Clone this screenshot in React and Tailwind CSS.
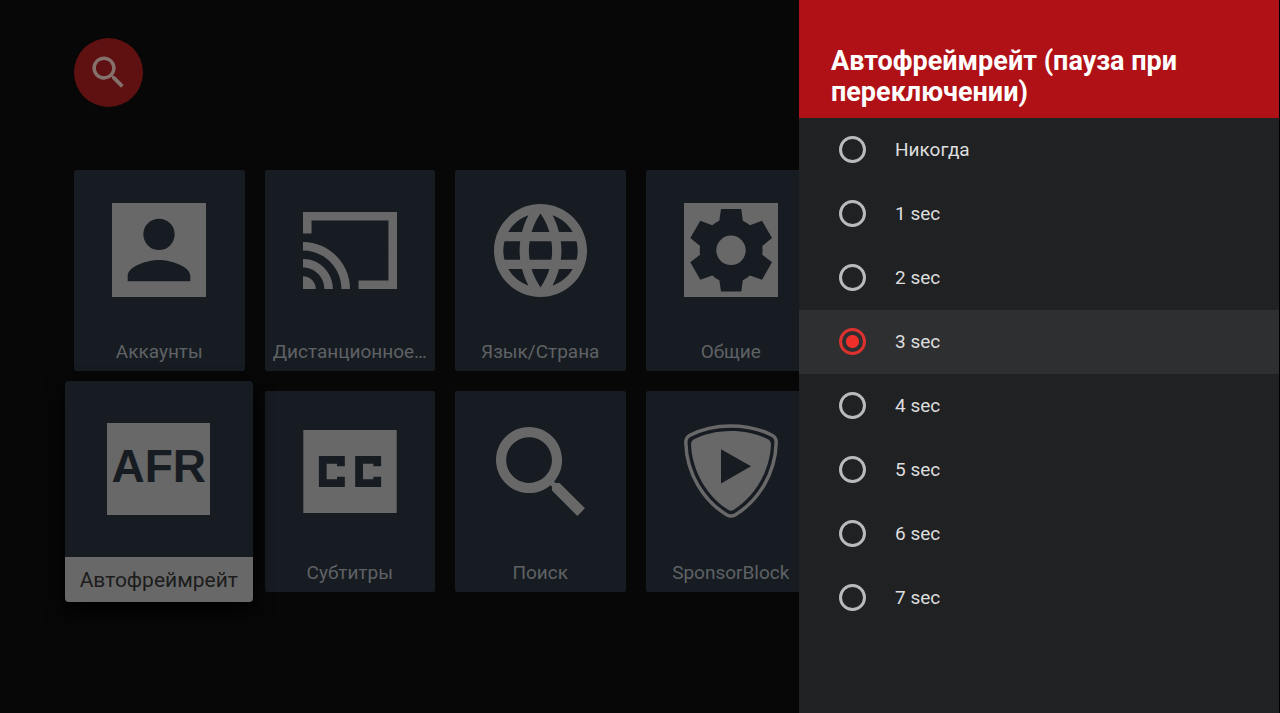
import React, { useState } from 'react';

const SEARCH_PATH =
  'M15.5 14h-.79l-.28-.27C15.41 12.59 16 11.11 16 9.5 16 5.91 13.09 3 9.5 3S3 5.91 3 9.5 5.91 16 9.5 16c1.61 0 3.09-.59 4.23-1.57l.27.28v.79l5 4.99L20.49 19l-4.99-5zm-6 0C7.01 14 5 11.99 5 9.5S7.01 5 9.5 5 14 7.01 14 9.5 11.99 14 9.5 14z';

function AccountIcon() {
  return (
    <svg viewBox="3 3 18 18" className="w-[94px] h-[94px]" fill="currentColor">
      <path fillRule="evenodd" d="M3 3h18v18H3zM12 6a3 3 0 1 0 0 6a3 3 0 1 0 0-6zM6 18h12v-1c0-2-4-3.1-6-3.1s-6 1.1-6 3.1z" />
    </svg>
  );
}

function CastIcon() {
  return (
    <svg viewBox="1 3 22 18" className="w-[94px] h-[77px]" fill="currentColor">
      <path d="M23 3H1v5h2V5h18v14h-7v2h9zM1 18v3h3c0-1.66-1.34-3-3-3zm0-4v2c2.76 0 5 2.24 5 5h2c0-3.87-3.13-7-7-7zm0-4v2c4.97 0 9 4.03 9 9h2c0-6.08-4.93-11-11-11z" />
    </svg>
  );
}

function GlobeIcon() {
  return (
    <svg viewBox="2 2 20 20" className="w-[93px] h-[93px]" fill="currentColor">
      <path d="M11.99 2C6.47 2 2 6.48 2 12s4.47 10 9.99 10C17.52 22 22 17.52 22 12S17.52 2 11.99 2zm6.93 6h-2.95c-.32-1.25-.78-2.45-1.38-3.56 1.84.63 3.37 1.91 4.33 3.56zM12 4.04c.83 1.2 1.48 2.53 1.91 3.96h-3.82c.43-1.43 1.08-2.76 1.91-3.96zM4.26 14C4.1 13.36 4 12.69 4 12s.1-1.36.26-2h3.38c-.08.66-.14 1.32-.14 2s.06 1.34.14 2H4.26zm.82 2h2.95c.32 1.25.78 2.45 1.38 3.56-1.84-.63-3.37-1.9-4.33-3.56zm2.95-8H5.08c.96-1.66 2.49-2.93 4.33-3.56C8.81 5.55 8.35 6.75 8.03 8zM12 19.96c-.83-1.2-1.48-2.53-1.91-3.96h3.82c-.43 1.43-1.08 2.76-1.91 3.96zM14.34 14H9.66c-.09-.66-.16-1.32-.16-2s.07-1.35.16-2h4.68c.09.65.16 1.32.16 2s-.07 1.34-.16 2zm.25 5.56c.6-1.11 1.06-2.31 1.38-3.56h2.95c-.96 1.65-2.49 2.93-4.33 3.56zM16.36 14c.08-.66.14-1.32.14-2s-.06-1.34-.14-2h3.38c.16.64.26 1.31.26 2s-.1 1.36-.26 2h-3.38z" />
    </svg>
  );
}

function GearIcon() {
  return (
    <svg viewBox="0 0 94 94" className="w-[94px] h-[94px]" fill="currentColor">
      <path
        fillRule="evenodd"
        d="M0 0H94V94H0zM37 6L35.3 17.7Q31.5 19.5 28.3 22.3L16.3 17.7L6.3 35L16 43Q15.5 47 16 51.7L6.3 59.3L16.3 76.7L28.3 72.5Q31.5 75.5 35.3 77.3L37 88.5H57.3L58.8 77.3Q62.5 75.5 66 72.5L78 76.7L88 59.3L78.3 51.7Q78.8 47 78.3 43L88 35L78 17.7L66 22.3Q62.5 19.5 58.8 17.7L57.3 6z"
      />
      <circle cx="47" cy="47.3" r="14.7" />
    </svg>
  );
}

function AfrIcon() {
  return (
    <span className="w-[103px] h-[92px] bg-[#686868] text-[#171c22] font-['Liberation_Sans',sans-serif] font-bold text-[46px] leading-[86px] text-center">
      AFR
    </span>
  );
}

function CaptionsIcon() {
  return (
    <svg viewBox="3 4 18 16" className="w-[94px] h-[83px]" fill="currentColor">
      <path fillRule="evenodd" d="M3 4h18v16H3zM6 9v6h5v-2H9.5v.5h-2v-3h2v.5H11V9zM13 9v6h5v-2h-1.5v.5h-2v-3h2v.5H18V9z" />
    </svg>
  );
}

function SearchTileIcon() {
  return (
    <svg viewBox="3 3 17.5 17.5" className="w-[89px] h-[89px]" fill="currentColor">
      <path d={SEARCH_PATH} />
    </svg>
  );
}

function ShieldIcon() {
  return (
    <svg viewBox="0 0 94 94" className="w-[94px] h-[94px]">
      <path
        d="M47 2C30 2 16 6 5.5 11.5Q1.8 13.5 1.8 18.5C2.5 50 20 77 43 91Q47 93 51 91C74 77 91.5 50 92.2 18.5Q92.2 13.5 88.5 11.5C78 6 64 2 47 2z"
        fill="none"
        stroke="currentColor"
        strokeWidth="3.5"
      />
      <path
        fill="currentColor"
        fillRule="evenodd"
        d="M47 7C32 7 19.5 10.5 9.5 15.5Q7 17 7 20C8 49 25 74 44.5 86Q47 87.5 49.5 86C69 74 86 49 87 20Q87 17 84.5 15.5C74.5 10.5 62 7 47 7zM37 25.3V59.5L67 42.3z"
      />
    </svg>
  );
}

const tiles = [
  { label: 'Аккаунты', Icon: AccountIcon },
  { label: 'Дистанционное…', Icon: CastIcon },
  { label: 'Язык/Страна', Icon: GlobeIcon },
  { label: 'Общие', Icon: GearIcon },
  { label: 'Автофреймрейт', Icon: AfrIcon, focused: true },
  { label: 'Субтитры', Icon: CaptionsIcon },
  { label: 'Поиск', Icon: SearchTileIcon },
  { label: 'SponsorBlock', Icon: ShieldIcon },
];

const options = ['Никогда', '1 sec', '2 sec', '3 sec', '4 sec', '5 sec', '6 sec', '7 sec'];

function Tile({ label, Icon, focused }) {
  if (focused) {
    return (
      <button type="button" className="z-10 -my-[10px] -ml-[9px] -mr-2 flex flex-col rounded-sm overflow-hidden bg-[#171c22] text-[#686868] shadow-[0_8px_20px_#000]">
        <span className="h-44 w-full flex items-center justify-center">
          <Icon />
        </span>
        <span className="h-[45px] w-full bg-[#686868] text-[#1c1c1c] text-[21px] leading-[47px] text-center whitespace-nowrap">{label}</span>
      </button>
    );
  }

  return (
    <button type="button" className="flex flex-col rounded-xs overflow-hidden bg-[#171c22] text-[#686868]">
      <span className="h-40 w-full flex items-center justify-center">
        <Icon />
      </span>
      <span className="h-[41px] w-full text-[#5f6265] text-[19px] leading-[43px] text-center whitespace-nowrap">{label}</span>
    </button>
  );
}

export default function App() {
  const [pause, setPause] = useState('3 sec');

  return (
    <div className="min-h-screen flex bg-[#070707] font-[Roboto,sans-serif]">
      <main className="flex-1 min-w-0 overflow-hidden pl-[74px] pt-[38px] pb-10">
        <button type="button" aria-label="Поиск" className="size-[69px] rounded-full bg-[#5f1010] text-[#84716c] flex items-center justify-center">
          <svg viewBox="0 0 24 24" className="size-[43px]" fill="currentColor">
            <path d={SEARCH_PATH} />
          </svg>
        </button>
        <div className="mt-[63px] w-[742px] grid grid-cols-4 auto-rows-[201px] gap-5">
          {tiles.map(t => <Tile key={t.label} {...t} />)}
        </div>
      </main>

      <aside className="w-[481px] shrink-0 bg-[#202123] border-r border-black">
        <header className="min-h-[118px] px-8 pb-[10px] flex items-end bg-[#b01116]">
          <h1 className="text-[27px] leading-[31px] font-bold text-white">Автофреймрейт (пауза при переключении)</h1>
        </header>
        <div role="radiogroup" aria-label="Автофреймрейт">
          {options.map(o => (
            <label key={o} className="h-16 pl-10 flex items-center gap-[29px] text-[19px] text-[#dededf] has-checked:bg-[#2e2f31]">
              <input
                type="radio"
                name="pause"
                value={o}
                checked={pause === o}
                onChange={() => setPause(o)}
                className="mb-px appearance-none size-[27px] rounded-full border-3 border-[#b9babb] checked:border-[#dc322f] checked:bg-[radial-gradient(circle,#ee2f2a_6px,transparent_7px)]"
              />
              {o}
            </label>
          ))}
        </div>
      </aside>
    </div>
  );
}
